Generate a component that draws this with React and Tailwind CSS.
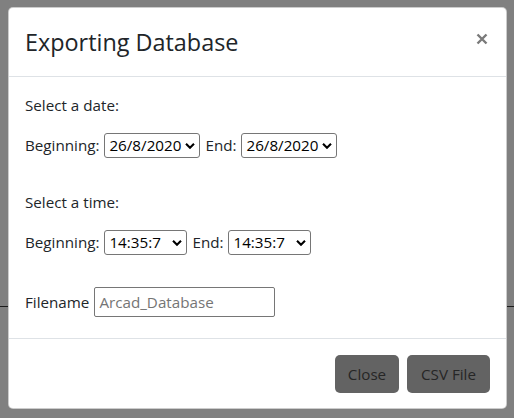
import React from "react";

function Chevron() {
    return (
        <svg
            className="pointer-events-none absolute right-[5px] top-1/2 -translate-y-1/2"
            width="10"
            height="7"
            viewBox="0 0 10 7"
            fill="none"
        >
            <path d="M1 1.2 L5 5.2 L9 1.2" stroke="#000" strokeWidth="2.1" />
        </svg>
    );
}

function Picker({ value, width }) {
    return (
        <span className="relative inline-flex">
            <select
                defaultValue={value}
                className={`${width} h-[25px] appearance-none rounded-[3px] border border-[#767676] bg-white pl-[4px] pr-[16px] text-[15.2px] leading-[23px] text-black outline-none`}
            >
                <option value={value}>{value}</option>
            </select>
            <Chevron />
        </span>
    );
}

function RangeRow({ value, width }) {
    return (
        <div className="flex h-[25px] items-center gap-[5px]">
            <span>Beginning:</span>
            <Picker value={value} width={width} />
            <span>End:</span>
            <Picker value={value} width={width} />
        </div>
    );
}

export default function App() {
    return (
        <div className="relative h-[418px] w-full overflow-hidden bg-[#808080] font-['Open_Sans',sans-serif]">
            {/* page behind the overlay */}
            <div className="pt-[306px]">
                <div className="h-px bg-[#1c1c1c]" />
            </div>

            <div className="absolute left-[8px] top-[7px] w-[499px] rounded-[5px] border border-black/20 bg-white text-[15.2px] text-[#212529]">
                <div className="flex items-start justify-between border-b border-[#dee2e6] p-4">
                    <h5 className="text-[23.4px] leading-[36px]">Exporting Database</h5>
                    <button className="mr-[2px] mt-[9px] cursor-pointer" aria-label="Close">
                        <svg width="12" height="12" viewBox="0 0 12 12">
                            <path d="M1.5 1.5 L10.5 10.5 M10.5 1.5 L1.5 10.5" stroke="#7a7a7a" strokeWidth="2.4" />
                        </svg>
                    </button>
                </div>

                <div className="px-4 pb-[21px] pt-4">
                    <p className="mb-4 leading-6">Select a date:</p>
                    <RangeRow value="26/8/2020" width="w-[96px]" />

                    <p className="mb-4 mt-8 leading-6">Select a time:</p>
                    <RangeRow value="14:35:7" width="w-[83px]" />

                    <div className="mt-8 flex items-center gap-[5px]">
                        <span>Filename</span>
                        <input
                            type="text"
                            placeholder="Arcad_Database"
                            className="h-[30px] w-[181px] rounded-[2px] border border-[#767676] px-[4px] text-[15.2px] outline-none placeholder:text-[#757575]"
                        />
                    </div>
                </div>

                <div className="flex justify-end gap-2 border-t border-[#dee2e6] px-4 pb-[15px] pt-4">
                    <button className="h-[38px] w-[64px] cursor-pointer rounded-[5px] bg-[#636363] text-[#262626]">
                        Close
                    </button>
                    <button className="h-[38px] w-[83px] cursor-pointer rounded-[5px] bg-[#636363] text-[#262626]">
                        CSV File
                    </button>
                </div>
            </div>
        </div>
    );
}
